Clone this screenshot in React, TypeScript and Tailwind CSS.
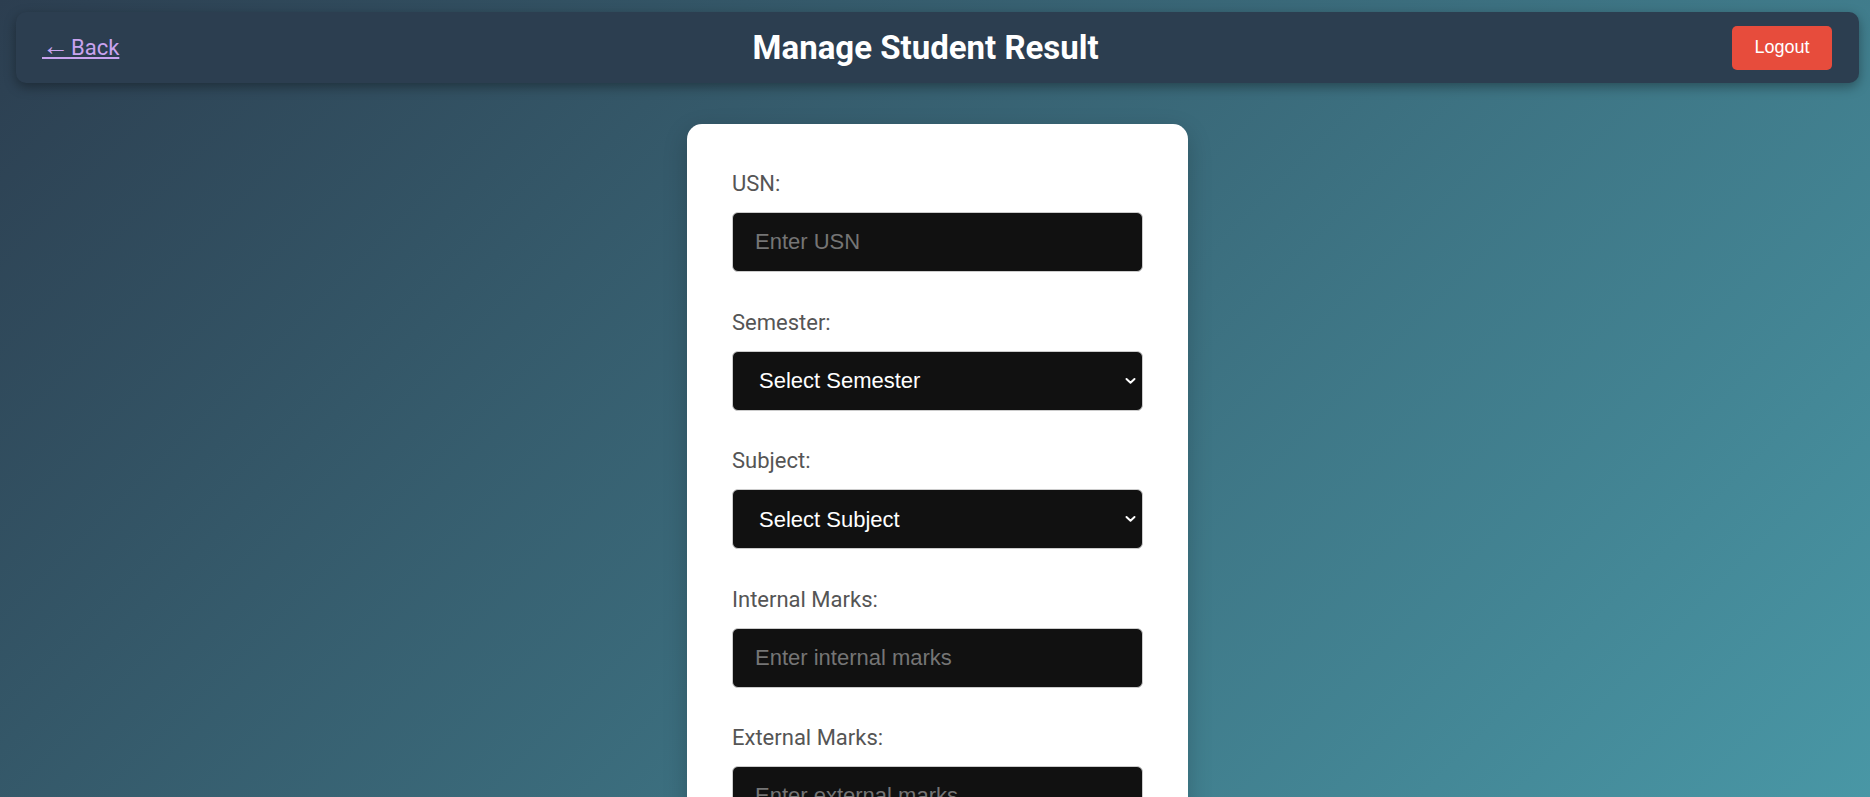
import React, { useState } from 'react';

const fieldFont = "font-['Liberation_Sans',Arial,sans-serif]";

interface FieldProps {
  label: string;
  children: React.ReactNode;
}

const Field: React.FC<FieldProps> = ({ label, children }) => (
  <div className="mb-[37.5px]">
    <label className="block text-[22px] leading-[26px] text-[#555] mb-[15px]">{label}</label>
    {children}
  </div>
);

const Chevron = () => (
  <svg
    className="pointer-events-none absolute right-[7px] top-1/2 -translate-y-1/2 w-[11px] h-[7px]"
    viewBox="0 0 11 7"
    fill="none"
    stroke="white"
    strokeWidth="2"
    strokeLinecap="round"
    strokeLinejoin="round"
  >
    <path d="M1.5 1.5 L5.5 5.2 L9.5 1.5" />
  </svg>
);

const semesters = ['1', '2', '3', '4', '5', '6', '7', '8'];

export default function App() {
  const [usn, setUsn] = useState('');
  const [semester, setSemester] = useState('');
  const [subject, setSubject] = useState('');
  const [internal, setInternal] = useState('');
  const [external, setExternal] = useState('');

  const inputCls = `w-full h-[60px] rounded-[6px] border border-[#ccc] bg-[#111] pl-[22px] pr-3 text-[22px] text-white placeholder:text-[#757575] outline-none ${fieldFont}`;
  const selectCls = `w-full h-[60px] appearance-none rounded-[6px] border border-[#ccc] bg-[#111] pl-[26px] pr-8 text-[22px] text-white outline-none ${fieldFont}`;

  return (
    <div className="min-h-[1100px] bg-[linear-gradient(135deg,#2c3e50,#4ca1af)] font-['Roboto',sans-serif] pt-[12px]">
      {/* Header */}
      <header className="ml-[16px] mr-[11px] h-[71px] rounded-[10px] bg-[#2c3e50] shadow-[0_4px_12px_rgba(0,0,0,0.35)] flex items-center justify-between pl-[26px] pr-[27px]">
        <a href="#" className="text-[22px] leading-[26px] text-[#c9a3ef] underline">
          <span className={`${fieldFont} text-[27px] leading-[0]`}>←</span>
          <span className="text-[8px] leading-[0]"> </span>Back
        </a>
        <h1 className="text-[33px] font-bold text-white">Manage Student Result</h1>
        <button className={`w-[100px] h-[44px] rounded-[5px] bg-[#e74c3c] text-white text-[18px] ${fieldFont}`}>
          Logout
        </button>
      </header>

      {/* Form card */}
      <main className="flex justify-center pl-[5px] pt-[41px] pb-10">
        <form
          className="w-[501px] bg-white rounded-[15px] px-[45px] pt-[47px] pb-[45px] shadow-[0_8px_24px_rgba(0,0,0,0.2)]"
          onSubmit={(e) => e.preventDefault()}
        >
          <Field label="USN:">
            <input className={inputCls} placeholder="Enter USN" value={usn} onChange={(e) => setUsn(e.target.value)} />
          </Field>

          <Field label="Semester:">
            <div className="relative">
              <select className={selectCls} value={semester} onChange={(e) => setSemester(e.target.value)}>
                <option value="">Select Semester</option>
                {semesters.map((s) => (
                  <option key={s} value={s}>
                    Semester {s}
                  </option>
                ))}
              </select>
              <Chevron />
            </div>
          </Field>

          <Field label="Subject:">
            <div className="relative">
              <select className={selectCls} value={subject} onChange={(e) => setSubject(e.target.value)}>
                <option value="">Select Subject</option>
              </select>
              <Chevron />
            </div>
          </Field>

          <Field label="Internal Marks:">
            <input
              className={inputCls}
              type="number"
              placeholder="Enter internal marks"
              value={internal}
              onChange={(e) => setInternal(e.target.value)}
            />
          </Field>

          <Field label="External Marks:">
            <input
              className={inputCls}
              type="number"
              placeholder="Enter external marks"
              value={external}
              onChange={(e) => setExternal(e.target.value)}
            />
          </Field>

          <button
            type="submit"
            className={`w-full h-[56px] rounded-[6px] bg-[#2c3e50] text-white text-[20px] ${fieldFont}`}
          >
            Save Result
          </button>
        </form>
      </main>
    </div>
  );
}
